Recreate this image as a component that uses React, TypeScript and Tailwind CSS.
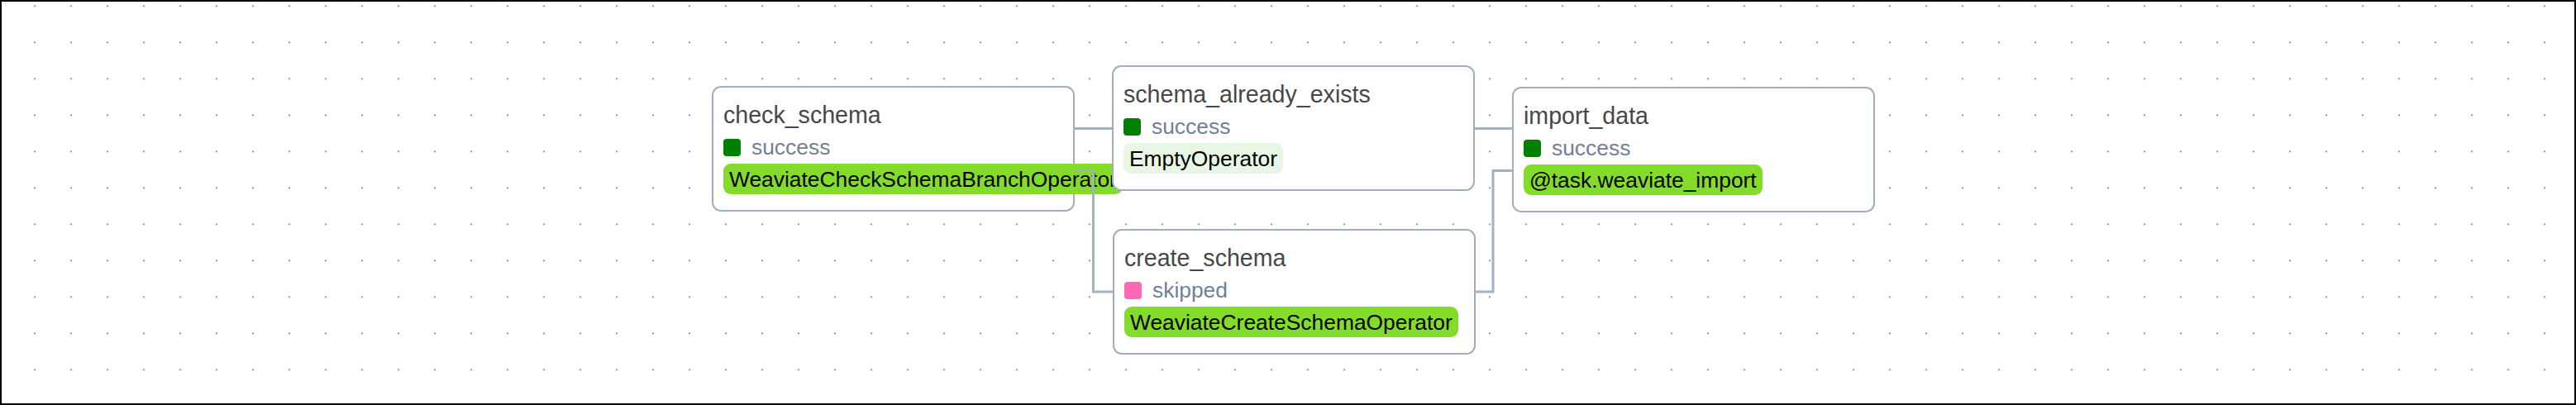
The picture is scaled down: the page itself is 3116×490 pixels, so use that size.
import React from 'react'

type Task = {
  id: string
  x: number
  y: number
  status: 'success' | 'skipped'
  operator: string
  opColor: string
}

const tasks: Task[] = [
  { id: 'check_schema', x: 861, y: 104, status: 'success', operator: 'WeaviateCheckSchemaBranchOperator', opColor: 'bg-[#84dc2a]' },
  { id: 'schema_already_exists', x: 1345, y: 79, status: 'success', operator: 'EmptyOperator', opColor: 'bg-[#e8f7e4]' },
  { id: 'create_schema', x: 1346, y: 277, status: 'skipped', operator: 'WeaviateCreateSchemaOperator', opColor: 'bg-[#84dc2a]' },
  { id: 'import_data', x: 1829, y: 105, status: 'success', operator: '@task.weaviate_import', opColor: 'bg-[#84dc2a]' },
]

const edges = [
  'M1300 155.5 H1346',
  'M1299 206.5 H1322.5 V353 H1347',
  'M1784 155.5 H1830',
  'M1784 353 H1806 V206.5 H1830',
]

function TaskNode({ task }: { task: Task }) {
  return (
    <div
      className="absolute flex h-[152px] w-[439px] flex-col rounded-[11px] border-2 border-[#a0aec0] bg-white px-[12px] pt-[17px]"
      style={{ left: task.x - 2, top: task.y - 2 }}
    >
      <div className="text-[28.6px] leading-[33px] text-[#474747]">{task.id}</div>
      <div className="mt-[7px] flex h-[30px] items-center gap-[13px]">
        <span
          className={
            task.status === 'success'
              ? 'h-[21px] w-[21px] rounded-[4px] bg-[#008000]'
              : 'h-[21px] w-[21px] rounded-[4px] bg-[#ff69b4]'
          }
        />
        <span className="text-[26.4px] leading-[30px] text-[#718096]">{task.status}</span>
      </div>
      <div
        className={`mt-[5px] h-[37px] self-start whitespace-nowrap rounded-[9px] px-[7px] pt-[2px] text-[26.4px] leading-[35px] text-black ${task.opColor}`}
      >
        {task.operator}
      </div>
    </div>
  )
}

export default function App() {
  return (
    <div className="relative h-[490px] w-[3116px] overflow-hidden border-2 border-black bg-white font-['Liberation_Sans',Arial,sans-serif]">
      <svg className="absolute inset-0 h-full w-full">
        <defs>
          <pattern id="dots" x="0" y="0" width="44" height="44" patternUnits="userSpaceOnUse">
            <circle cx="40" cy="5.4" r="1.1" fill="#91919a" />
          </pattern>
        </defs>
        <rect width="100%" height="100%" fill="url(#dots)" />
      </svg>

      {tasks.map((t) => (
        <TaskNode key={t.id} task={t} />
      ))}

      <svg className="pointer-events-none absolute left-[-2px] top-[-2px] h-[490px] w-[3116px]">
        {edges.map((d, i) => (
          <path key={i} d={d} fill="none" stroke="#a3b1c3" strokeWidth={3} />
        ))}
      </svg>
    </div>
  )
}
